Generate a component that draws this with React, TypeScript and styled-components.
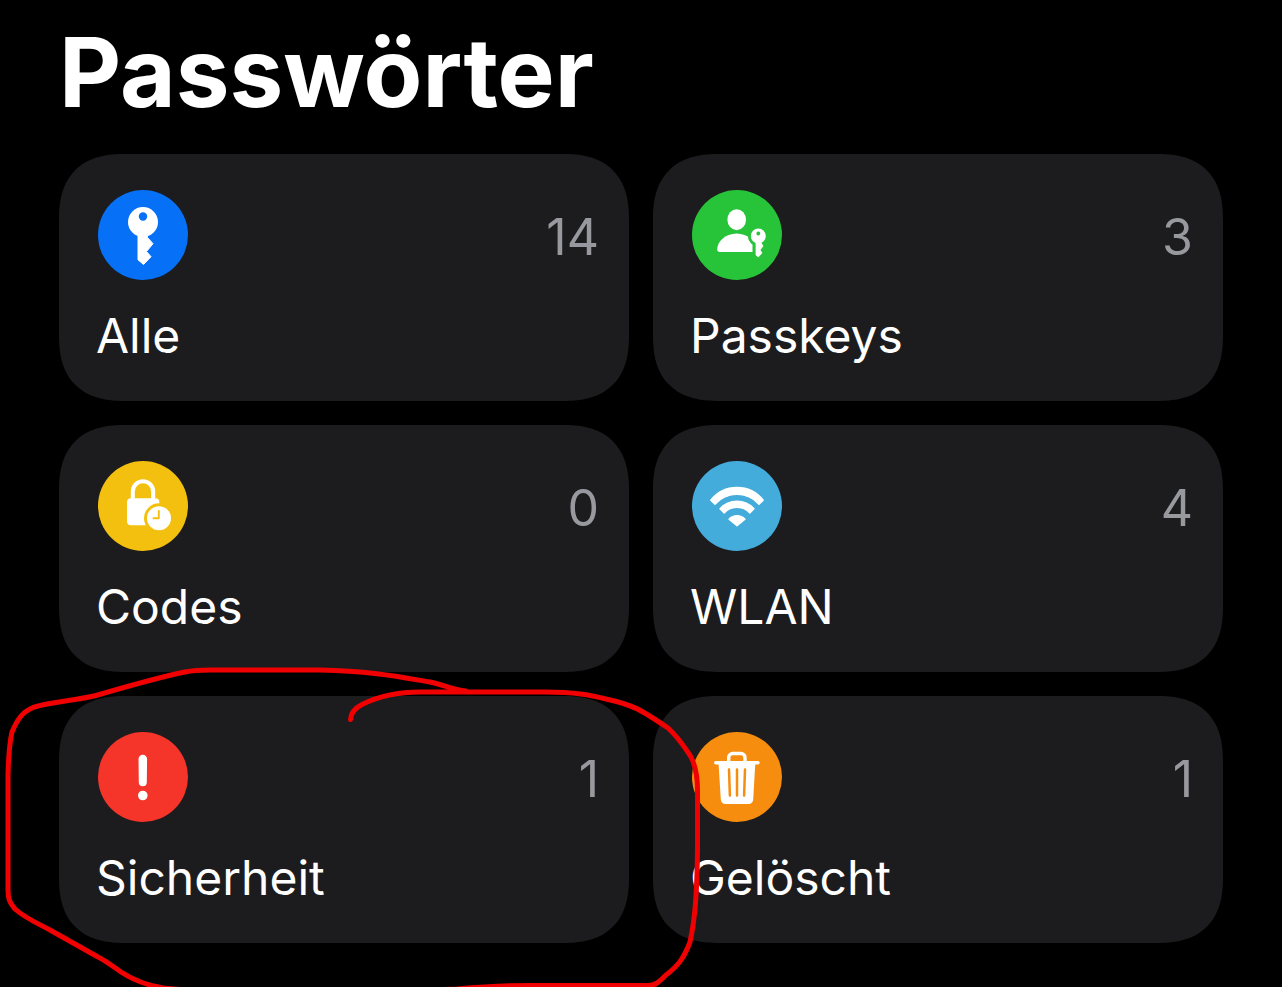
import React from "react";
import styled, { createGlobalStyle } from "styled-components";

const GlobalStyle = createGlobalStyle`
  * { box-sizing: border-box; }
  html { background: #000; }
  body {
    margin: 0;
    background: #000;
    color: #fff;
    font-family: Inter, "Liberation Sans", sans-serif;
    -webkit-font-smoothing: antialiased;
  }
`;

const Page = styled.main`
  min-height: 100vh;
  padding: 12px 59px 44px;
  overflow: hidden;
`;

const Title = styled.h1`
  margin: 0 0 22px 0;
  font-size: 96px;
  line-height: 120px;
  font-weight: 700;
`;

const Grid = styled.ul`
  display: grid;
  grid-template-columns: 1fr 1fr;
  gap: 24px;
  margin: 0;
  padding: 0;
  list-style: none;
`;

const Cell = styled.li`
  position: relative;
  min-width: 0;
`;

const Tile = styled.button`
  display: flex;
  flex-direction: column;
  gap: 26px;
  width: 100%;
  padding: 36px 30px 35px 37px;
  border: 0;
  border-radius: 54px;
  background: #1c1c1e;
  color: inherit;
  font: inherit;
  text-align: left;
  cursor: pointer;

  @supports (corner-shape: superellipse(1.3)) {
    border-radius: 66px;
    corner-shape: superellipse(1.3);
  }
`;

const TileTop = styled.span`
  display: flex;
  align-items: center;
  justify-content: space-between;
  padding-left: 2px;
`;

const Badge = styled.span<{ $color: string }>`
  display: block;
  width: 90px;
  height: 90px;
  border-radius: 50%;
  background: ${(p) => p.$color};
  color: ${(p) => p.$color};

  svg { display: block; }
`;

const Count = styled.span`
  padding-top: 3px;
  font-size: 50px;
  line-height: 60px;
  color: #98989f;
`;

const Label = styled.span`
  font-size: 48px;
  line-height: 60px;
`;

const Marker = styled.svg`
  position: absolute;
  z-index: 1;
  left: -59px;
  top: -36px;
  pointer-events: none;
`;

/* Glyphs are white; currentColor is the badge colour and cuts the holes. */
const Glyph = ({ children }: { children: React.ReactNode }) => (
  <svg width="90" height="90" viewBox="0 0 90 90" fill="#fff" aria-hidden="true">
    {children}
  </svg>
);

const KeyGlyph = () => (
  <Glyph>
    <circle cx="45" cy="32" r="15" />
    <path
      d="M40 44V69.800L45.500 74.500L53 66.700L48.500 61.500L55 53.700L49.500 47.500V44Z"
      stroke="#fff"
      strokeWidth="1"
      strokeLinejoin="round"
    />
    <circle cx="45" cy="26.500" r="4.200" fill="currentColor" />
  </Glyph>
);

const PasskeyGlyph = () => (
  <Glyph>
    <ellipse cx="44.700" cy="29.700" rx="9.300" ry="10.500" />
    <path d="M28 62C26 62 25.200 61 25.200 59.300C25.200 52 33 43.500 44.700 43.500C56 43.500 64 52 64 59.500V62Z" />
    <circle cx="66.300" cy="46" r="10.400" fill="currentColor" />
    <path d="M60.500 52H75V70H60.500Z" fill="currentColor" />
    <circle cx="66.300" cy="46" r="7.500" />
    <path
      d="M64 52V65L66.300 67L70 63L68 60L71 56L68.800 52.500Z"
      stroke="#fff"
      strokeWidth="0.800"
      strokeLinejoin="round"
    />
    <circle cx="66.300" cy="43.500" r="1.900" fill="currentColor" />
  </Glyph>
);

const CodesGlyph = () => (
  <Glyph>
    <path d="M34.800 39V30.500a10.200 10.200 0 0 1 20.400 0V39" fill="none" stroke="#fff" strokeWidth="4" />
    <rect x="29" y="37.300" width="32.300" height="27" rx="4" />
    <circle cx="61" cy="57.300" r="15" fill="currentColor" />
    <circle cx="61" cy="57.300" r="12" />
    <path
      d="M60.800 50V57.200H55.500"
      fill="none"
      stroke="currentColor"
      strokeWidth="1.900"
      strokeLinecap="round"
      strokeLinejoin="round"
    />
  </Glyph>
);

const WifiGlyph = () => (
  <Glyph>
    <g stroke="#fff" strokeWidth="1.400" strokeLinejoin="round">
      <path d="M18.800 39.200A33.400 33.400 0 0 1 71.200 39.200L67 43.200A29.600 29.600 0 0 0 23 43.200Z" />
      <path d="M28 47.700A23.200 23.200 0 0 1 62 47.700L57.800 51.900A17.600 17.600 0 0 0 32.200 51.900Z" />
      <path d="M37 58.200A11 11 0 0 1 53 58.200L45 64.700Z" />
    </g>
  </Glyph>
);

const AlertGlyph = () => (
  <Glyph>
    <path d="M40.500 27a4.300 4.300 0 0 1 8.600 0L48.800 50.300a4 4 0 0 1-8 0Z" />
    <circle cx="44.800" cy="63.500" r="4.800" />
  </Glyph>
);

const TrashGlyph = () => (
  <Glyph>
    <path
      d="M36.700 31V25.500a4 4 0 0 1 4-4H49a4 4 0 0 1 4 4V31"
      fill="none"
      stroke="#fff"
      strokeWidth="3.400"
    />
    <path d="M23.700 30.700H66" fill="none" stroke="#fff" strokeWidth="3.400" strokeLinecap="round" />
    <path d="M26.500 31H63.300L61.200 67.500a4.600 4.600 0 0 1-4.600 4.500H33.400a4.600 4.600 0 0 1-4.600-4.500Z" />
    <path
      d="M37 37.500L37.900 63.500M45 37.500V63.500M53 37.500L52.100 63.500"
      fill="none"
      stroke="currentColor"
      strokeWidth="2.500"
      strokeLinecap="round"
    />
  </Glyph>
);

/* Hand-drawn loop round the security tile. */
const HandCircle = () => (
  <Marker width="720" height="327" viewBox="0 660 720 327" aria-hidden="true">
    <path
      d="M350.500 719.500C351 712 355 708 362 704.500C377 697 397 692 420 692H545C575 692 590 695 606 699C633 705 640 709 668 728C680 739 685 748 691 757C696 767 697.500 777 697.500 790V850C697 885 696 915 690 942C684 958 678 966 666 975C658 983 655 985.500 648 985.500H530C500 985.500 480 987 457 989C360 993 220 994 163 988C146 985 133 980 121 972C111 965 106 961 98 957L50 930C35 922 25 918 15 909C9 902 8 898 8 890V775C8.500 755 9 745 12 732C17 720 22 712 33 707.500C50 702 73 701 96 695.500C125 687 165 676 185 672C195 670 200 670 210 670H320C370 671 400 677 430 682C445 685 452 690 466 691"
      fill="none"
      stroke="#f00000"
      strokeWidth="5"
      strokeLinecap="round"
      strokeLinejoin="round"
    />
  </Marker>
);

const tiles = [
  { label: "Alle", count: 14, color: "#0670f6", Icon: KeyGlyph },
  { label: "Passkeys", count: 3, color: "#27c43a", Icon: PasskeyGlyph },
  { label: "Codes", count: 0, color: "#f4c010", Icon: CodesGlyph },
  { label: "WLAN", count: 4, color: "#43acdb", Icon: WifiGlyph },
  { label: "Sicherheit", count: 1, color: "#f5342a", Icon: AlertGlyph, marked: true },
  { label: "Gelöscht", count: 1, color: "#f78d0e", Icon: TrashGlyph },
];

export default function App() {
  return (
    <>
      <GlobalStyle />
      <Page>
        <Title>Passwörter</Title>
        <Grid>
          {tiles.map(({ label, count, color, Icon, marked }) => (
            <Cell key={label}>
              <Tile type="button">
                <TileTop>
                  <Badge $color={color}>
                    <Icon />
                  </Badge>
                  <Count>{count}</Count>
                </TileTop>
                <Label>{label}</Label>
              </Tile>
              {marked && <HandCircle />}
            </Cell>
          ))}
        </Grid>
      </Page>
    </>
  );
}
